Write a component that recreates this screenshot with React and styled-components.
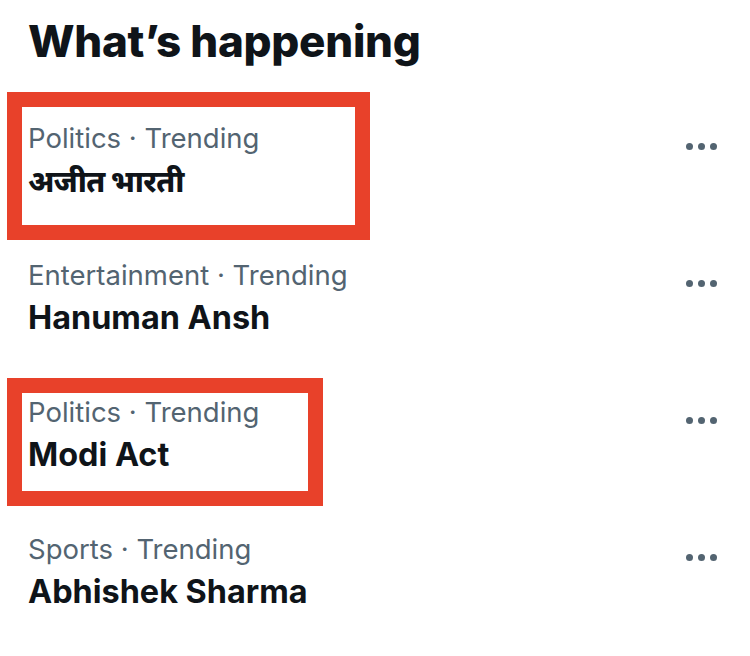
import React from "react";
import styled, { createGlobalStyle } from "styled-components";

const GlobalStyle = createGlobalStyle`
  html, body {
    margin: 0;
    padding: 0;
    background: #ffffff;
  }
  body {
    font-family: Inter, "Noto Sans", "Liberation Sans", sans-serif;
    -webkit-font-smoothing: antialiased;
  }
`;

const Panel = styled.section`
  width: 750px;
  height: 656px;
  box-sizing: border-box;
  padding: 13px 28px 0 28px;
  background: #ffffff;
  overflow: hidden;
`;

const Heading = styled.h2`
  margin: 0;
  font-size: 44px;
  line-height: 56px;
  font-weight: 800;
  color: #0f1419;
  letter-spacing: -0.3px;
`;

const List = styled.div`
  display: flex;
  flex-direction: column;
  margin-top: 52px;
`;

const Row = styled.div`
  position: relative;
  display: flex;
  justify-content: space-between;
  align-items: flex-start;
  height: 137px;
`;

const Text = styled.div`
  display: flex;
  flex-direction: column;
`;

const Category = styled.span`
  font-size: 27.5px;
  line-height: 34px;
  font-weight: 400;
  color: #536471;
`;

const Name = styled.span`
  margin-top: 6px;
  font-size: ${(p) => (p.lang === "hi" ? "30px" : "32.4px")};
  line-height: 40px;
  font-weight: ${(p) => (p.lang === "hi" ? 800 : 700)};
  letter-spacing: ${(p) => (p.lang === "hi" ? "-0.6px" : "0")};
  color: #0f1419;
`;

const More = styled.button`
  display: flex;
  align-items: center;
  gap: 5px;
  margin: 22px 5px 0 0;
  padding: 0;
  border: 0;
  background: transparent;
  cursor: pointer;
`;

const Dot = styled.span`
  width: 7px;
  height: 7px;
  border-radius: 50%;
  background: #536471;
`;

const Highlight = styled.div`
  position: absolute;
  left: -21px;
  top: ${(p) => p.$top}px;
  width: ${(p) => p.$width}px;
  height: ${(p) => p.$height}px;
  box-sizing: border-box;
  border: 15px solid #e8412a;
  pointer-events: none;
`;

const trends = [
  { category: "Politics", name: "अजीत भारती", lang: "hi", box: { top: -29, width: 363, height: 148 } },
  { category: "Entertainment", name: "Hanuman Ansh" },
  { category: "Politics", name: "Modi Act", box: { top: -17, width: 316, height: 128 } },
  { category: "Sports", name: "Abhishek Sharma" },
];

function Trend({ category, name, lang, box }) {
  return (
    <Row>
      <Text>
        <Category>{category} · Trending</Category>
        <Name lang={lang}>{name}</Name>
      </Text>
      <More aria-label="More">
        <Dot />
        <Dot />
        <Dot />
      </More>
      {box && <Highlight $top={box.top} $width={box.width} $height={box.height} />}
    </Row>
  );
}

export default function App() {
  return (
    <>
      <GlobalStyle />
      <Panel>
        <Heading>What’s happening</Heading>
        <List>
          {trends.map((t) => (
            <Trend key={t.name} {...t} />
          ))}
        </List>
      </Panel>
    </>
  );
}
